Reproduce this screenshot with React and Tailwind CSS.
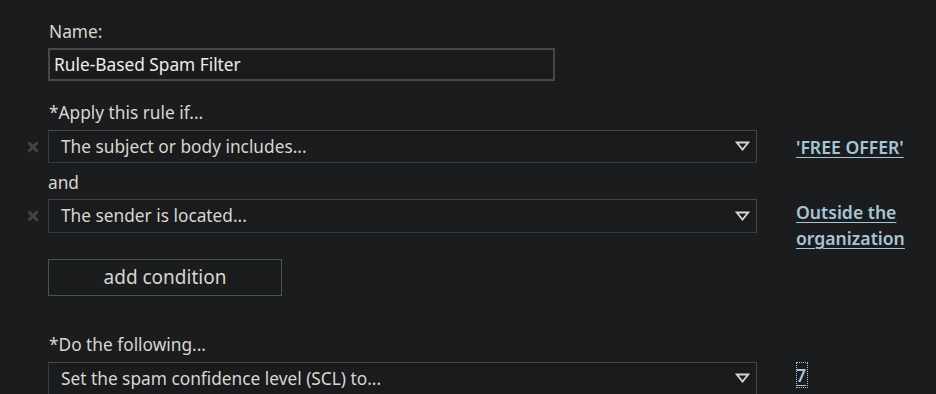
import React from 'react';

const font = { fontFamily: '"Noto Sans", "Open Sans", sans-serif' };

const Caret = () => (
  <svg width="15" height="11" viewBox="0 0 15 11" className="shrink-0">
    <path d="M1.8 1.5 H13.2 L7.5 8.6 Z" fill="#1b1c1e" stroke="#d8d6d0" strokeWidth="1.8" strokeLinejoin="miter" />
  </svg>
);

const Remove = () => (
  <svg width="12" height="12" viewBox="0 0 12 12">
    <path d="M1.5 1.5 L10.5 10.5 M10.5 1.5 L1.5 10.5" stroke="#444444" strokeWidth="3" />
  </svg>
);

const Select = ({ text, removable, link, h = 'h-[33px]', linkPad = 'pt-[3px]' }) => (
  <div className={`flex items-start ${h}`}>
    <div className="w-[48px] flex justify-end pr-[9px] items-center h-full">
      {removable && <Remove />}
    </div>
    <div className="w-[709px] h-full flex items-center justify-between pl-[12px] pr-[6px] border border-t-[#464646] border-r-[#464646] border-l-[#2d3d4c] border-b-[#2d3d4c] bg-[#1a1b1d]">
      <span className="text-[17.3px] text-[#d9d6cf]">{text}</span>
      <Caret />
    </div>
    <div className={`ml-[39px] ${linkPad}`}>{link}</div>
  </div>
);

const Link = ({ children }) => (
  <a className="text-[17.6px] leading-[26px] font-semibold text-[#a6c5d6] underline underline-offset-[3px] decoration-[1px] block">
    {children}
  </a>
);

export default function App() {
  return (
    <div style={font} className="w-[936px] h-[394px] overflow-hidden bg-[#1b1c1e] text-[#d9d6cf] pt-[21px]">
      <div className="pl-[49px] text-[17.3px] leading-[22px]">Name:</div>
      <div className="pl-[48px] mt-[5px]">
        <div className="w-[507px] h-[33px] border-2 border-[#474747] flex items-center pl-[4px] text-[17.3px] text-[#eeebe4] bg-[#1a1b1d]">
          Rule-Based Spam Filter
        </div>
      </div>
      <div className="pl-[49px] mt-[21px] text-[17.3px] leading-[22px]">*Apply this rule if...</div>
      <div className="mt-[6px]">
        <Select text="The subject or body includes..." removable linkPad="pt-[4px]" link={<Link>'FREE OFFER'</Link>} />
      </div>
      <div className="pl-[48px] mt-[9px] text-[17.3px] leading-[22px]">and</div>
      <div className="mt-[5px]">
        <Select
          text="The sender is located..."
          removable
          h="h-[34px]"
          linkPad="pt-0"
          link={<Link>Outside the<br />organization</Link>}
        />
      </div>
      <div className="pl-[48px] mt-[26px]">
        <button className="w-[234px] h-[37px] border border-[#4c5452] text-[19px] text-[#d9d6cf] flex items-center justify-center">
          add condition
        </button>
      </div>
      <div className="pl-[49px] mt-[38px] text-[17.3px] leading-[22px]">*Do the following...</div>
      <div className="mt-[6px]">
        <Select
          text="Set the spam confidence level (SCL) to..."
          linkPad="pt-0"
          link={
            <span className="inline-block outline-1 outline-dotted outline-[#a6c5d6] -outline-offset-1 pr-[2px]">
              <Link>7</Link>
            </span>
          }
        />
      </div>
    </div>
  );
}
